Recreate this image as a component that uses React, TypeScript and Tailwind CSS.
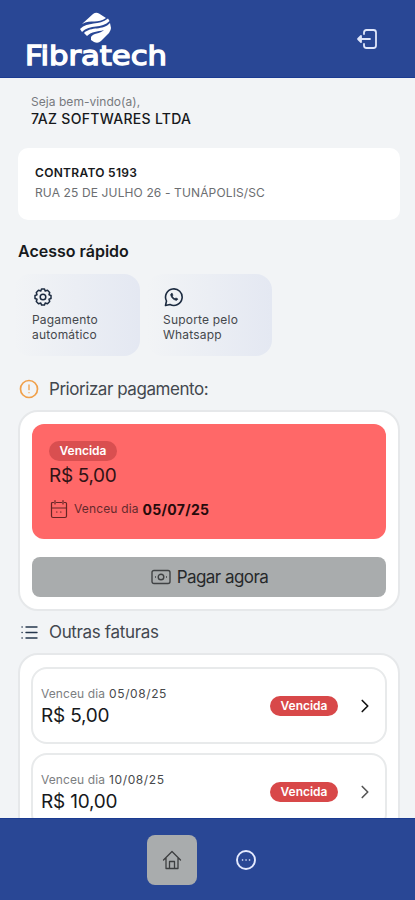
import { ChevronRight } from 'lucide-react'

const shortcuts = [
  { icon: 'gear', lines: ['Pagamento', 'automático'] },
  { icon: 'whatsapp', lines: ['Suporte pelo', 'Whatsapp'] }
]

const invoices = [
  { date: '05/08/25', amount: 'R$ 5,00', arrow: 'text-[#111]' },
  { date: '10/08/25', amount: 'R$ 10,00', arrow: 'text-[#555]' }
]

const Logo = () => (
  <svg width="144" height="60" viewBox="0 0 144 60" className="text-white" fill="currentColor">
    <path d="M57 12L68 2Q71 0 74 1.500L81 6C73 12 66 7 57 12Z" />
    <path d="M55 17C63 9 74 14 83 6.500L84.500 9C77 17 65 12 57 20Z" />
    <path d="M59 21C66 14 78 19 85 11L86 16Q86 18 84 21L76 29Q73 32 69 30L66 28V25C68 21 75 22 79 18C72 20 67 19 62 24Z" />
    <text
      x="0"
      y="53"
      textLength="142"
      lengthAdjust="spacingAndGlyphs"
      stroke="currentColor"
      strokeWidth="1.300"
      className="font-['DejaVu_Sans',sans-serif] text-[26px]"
    >
      Fibratech
    </text>
  </svg>
)

const LogoutIcon = () => (
  <svg width="22" height="22" viewBox="0 0 22 22" fill="none" stroke="#dfe6fb" strokeWidth="1.8" strokeLinecap="round" strokeLinejoin="round">
    <path d="M8 6V4.500Q8 2 10.500 2H17.500Q20 2 20 4.500V17.500Q20 20 17.500 20H10.500Q8 20 8 17.500V16" />
    <path d="M14 11H2M5 8L2 11L5 14Z" fill="#dfe6fb" />
  </svg>
)

const GearIcon = () => (
  <svg width="18" height="18" viewBox="0 0 18 18" fill="none" stroke="#1c2b40" strokeWidth="1.500" strokeLinejoin="round">
    <path d="M7.500 1H10.500L11.200 3L13.500 2.300L15.700 4.500L15 6.800L17 7.500V10.500L15 11.200L15.700 13.500L13.500 15.700L11.200 15L10.500 17H7.500L6.800 15L4.500 15.700L2.300 13.500L3 11.200L1 10.500V7.500L3 6.800L2.300 4.500L4.500 2.300L6.800 3Z" />
    <circle cx="9" cy="9" r="2.800" />
  </svg>
)

const WhatsappIcon = () => (
  <svg width="20" height="20" viewBox="0 0 20 20" fill="none" stroke="#1c2b40" strokeWidth="1.600" strokeLinecap="round" strokeLinejoin="round">
    <path d="M1.500 18.500L2.500 14A8.300 8.300 0 1 1 6 17.500Z" />
    <path d="M7.300 6.500Q6.500 7 6.800 8.200C7.500 10.800 9.300 12.600 11.900 13.200Q13.200 13.400 13.600 12.500L13.500 11.700L11.900 11L11 11.800Q9 11 8.200 9.100L8.900 8.200L8.200 6.500Z" strokeWidth=".8" fill="#1c2b40" />
  </svg>
)

const AlertIcon = () => (
  <svg width="20" height="20" viewBox="0 0 20 20" fill="none" stroke="#f0a04a" strokeLinecap="round">
    <circle cx="10" cy="10" r="8.500" strokeWidth="1.700" />
    <path d="M10 6V10.700M10 13.600V13.700" strokeWidth="1.300" />
  </svg>
)

const CalendarIcon = () => (
  <svg width="18" height="20" viewBox="0 0 18 20" fill="none" stroke="#662525" strokeWidth="1.200" strokeLinecap="round">
    <path d="M3.500 3.500H2.500Q1.500 3.500 1.500 4.500V17Q1.500 18.500 3 18.500H15Q16.500 18.500 16.500 17V4.500Q16.500 3.500 15.500 3.500H14.500M6.500 3.500H11.500" />
    <path d="M1.500 9H16.500M5 1.500V5M13 1.500V5M6.500 13H7M10.500 13H11" />
  </svg>
)

const MoneyIcon = () => (
  <svg width="20" height="16" viewBox="0 0 20 16" fill="none" stroke="#404244" strokeWidth="1.400">
    <rect x="1" y="1.500" width="18" height="13" rx="2" />
    <circle cx="10" cy="8" r="2.800" />
    <path d="M4 8H5M15 8H16" />
  </svg>
)

const ListIcon = () => (
  <svg width="17" height="15" viewBox="0 0 17 15" fill="none" stroke="#26374d" strokeWidth="1.400" strokeLinecap="round">
    <path d="M5 2H16M5 7.500H16M5 13H16M1 2H1.200M1 7.500H1.200M1 13H1.200" />
  </svg>
)

const HomeIcon = () => (
  <svg width="20" height="20" viewBox="0 0 20 20" fill="none" stroke="#3d3f40" strokeWidth="1.300" strokeLinecap="round" strokeLinejoin="round">
    <path d="M1.500 10L10 1.500L18.500 10M4 8V18.500H16V8M7.500 18.500V11.500H12.500V18.500" />
  </svg>
)

const MoreIcon = () => (
  <svg width="22" height="22" viewBox="0 0 22 22" fill="none" stroke="#e4eaff" strokeLinecap="round">
    <circle cx="11" cy="11" r="9" strokeWidth="1.900" />
    <path d="M7.500 11H7.600M11 11H11.100M14.500 11H14.600" strokeWidth="1.600" />
  </svg>
)

const App = () => {
  return (
    <div className="flex h-[900px] w-[415px] flex-col overflow-hidden bg-[#f2f4f6] font-['Inter',sans-serif] text-[#17191c]">
      <header className="flex h-[78px] shrink-0 items-start justify-between border-b border-[#1b3b91] bg-[#294795] pt-3 pr-[37px] pl-[25px]">
        <Logo />
        <div className="pt-4">
          <LogoutIcon />
        </div>
      </header>

      <main className="min-h-0 flex-1 overflow-hidden pr-[15px] pl-[18px]">
        <div className="pt-[15px] pl-[13px] whitespace-nowrap">
          <p className="h-[17px] text-[12px] leading-[17px] tracking-[0.05px] text-[#777a7e]">Seja bem-vindo(a),</p>
          <p className="h-[18px] text-[14px] leading-[18px] font-medium tracking-[0.3px]">7AZ SOFTWARES LTDA</p>
        </div>

        <section className="mt-5 h-[72px] rounded-[10px] bg-white pt-[15px] pl-[17px] whitespace-nowrap">
          <p className="h-5 text-[12px] leading-5 font-semibold tracking-[0.3px]">CONTRATO 5193</p>
          <p className="h-5 text-[12px] leading-5 tracking-[0.13px] text-[#6c6e71]">RUA 25 DE JULHO 26 - TUNÁPOLIS/SC</p>
        </section>

        <h2 className="mt-5 h-[22px] text-[16px] leading-[22px] font-semibold whitespace-nowrap">Acesso rápido</h2>

        <div className="mt-3 flex gap-[7px]">
          {shortcuts.map((item) => (
            <div
              key={item.icon}
              className="h-[82px] w-[125px] rounded-2xl bg-gradient-to-r from-[#f2f4f6] to-[#e4e8f2] pt-[13px] pl-[16px] first:-ml-[4px] first:w-[126px] first:pl-[18px]"
            >
              <div className="flex h-[25px] items-start pl-px">{item.icon === 'gear' ? <div className="pt-px pl-px"><GearIcon /></div> : <WhatsappIcon />}</div>
              {item.lines.map((line) => (
                <p key={line} className="text-[12px] leading-[15px] tracking-[0.2px] whitespace-nowrap text-[#45484c]">{line}</p>
              ))}
            </div>
          ))}
        </div>

        <div className="mt-[22px] flex h-[22px] items-center gap-[10px] pl-px">
          <AlertIcon />
          <h2 className="text-[17px] leading-[22px] tracking-[-0.45px] whitespace-nowrap text-[#43484f]">Priorizar pagamento:</h2>
        </div>

        <section className="mt-[10px] h-[201px] rounded-[20px] border-2 border-[#e6e8ea] bg-white px-3 pt-3">
          <div className="h-[115px] rounded-xl bg-[#ff6868] pt-[17px] pl-[17px]">
            <div className="flex h-5 w-[68px] items-center justify-center rounded-full bg-[#d94f50] text-[12px] font-semibold text-white">Vencida</div>
            <p className="h-[29px] text-[19px] leading-[29px] tracking-[-0.35px] whitespace-nowrap text-[#301315]">R$ 5,00</p>
            <div className="mt-[9px] flex h-5 items-center whitespace-nowrap">
              <div className="ml-px"><CalendarIcon /></div>
              <span className="ml-[6px] text-[12px] tracking-[0.15px] text-[#662a2d]">Venceu dia</span>
              <span className="ml-1 text-[14px] font-bold tracking-[0.3px] text-[#260b0c]">05/07/25</span>
            </div>
          </div>
          <button className="mt-[18px] flex h-10 w-full items-center justify-center gap-[6px] rounded-lg bg-[#a9acad] pl-px text-[17px] tracking-[-0.55px] whitespace-nowrap text-[#27292b]">
            <MoneyIcon />
            <span className="pt-px">Pagar agora</span>
          </button>
        </section>

        <div className="mt-[10px] flex h-[22px] items-center gap-[11px] pl-[3px]">
          <ListIcon />
          <h2 className="text-[17px] leading-[22px] tracking-[-0.35px] whitespace-nowrap text-[#43484f]">Outras faturas</h2>
        </div>

        <section className="mt-[10px] h-[220px] rounded-[20px] border-2 border-[#e6e8ea] bg-white px-[11px] pt-3">
          <div className="flex flex-col gap-[9px]">
            {invoices.map((invoice) => (
              <div key={invoice.date} className="flex h-[77px] items-center rounded-2xl border-2 border-[#e8eaeb] pr-3 pl-2">
                <div className="w-[229px] whitespace-nowrap">
                  <p className="flex h-5 items-center gap-1 pt-px text-[12px] tracking-[0.1px]">
                    <span className="text-[#7c7e81]">Venceu dia</span>
                    <span className="tracking-[0.6px] text-[#47494c]">{invoice.date}</span>
                  </p>
                  <p className="h-6 text-[19px] leading-6 tracking-[-0.2px] text-[#17191c]">{invoice.amount}</p>
                </div>
                <span className="flex h-5 w-[68px] items-center justify-center rounded-full bg-[#d84849] text-[12px] font-semibold text-white">Vencida</span>
                <ChevronRight className={`ml-auto ${invoice.arrow} mr-[-3px]`} size={22} strokeWidth={1.8} />
              </div>
            ))}
          </div>
        </section>
      </main>

      <nav className="flex h-[82px] shrink-0 items-center justify-center gap-[37px] border-t border-[#1b3b91] bg-[#294795] pr-[11px]">
        <button className="flex size-[50px] items-center justify-center rounded-lg bg-[#a9acad]">
          <HomeIcon />
        </button>
        <button className="flex w-6 items-center justify-center">
          <MoreIcon />
        </button>
      </nav>
    </div>
  )
}

export default App
